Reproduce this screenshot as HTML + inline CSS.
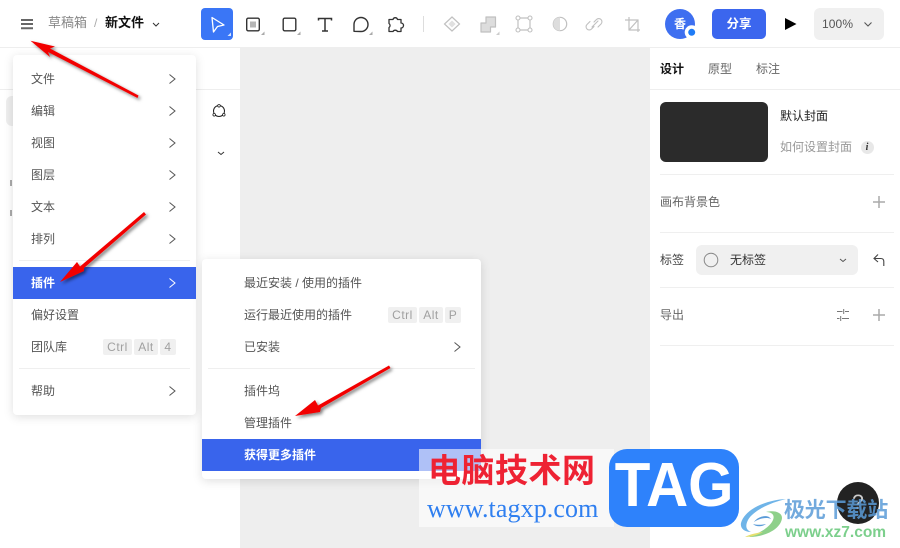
<!DOCTYPE html>
<html lang="zh"><head><meta charset="utf-8"><style>
*{box-sizing:border-box}
html,body{margin:0;padding:0}
body{width:900px;height:548px;position:relative;overflow:hidden;background:#fff;font-family:"Liberation Sans","Noto Sans CJK SC",sans-serif;font-size:12px;color:#333}
.a{position:absolute}
.t{position:absolute;line-height:16px;white-space:nowrap}
.menu{position:absolute;background:#fff;border-radius:4px;box-shadow:0 2px 10px rgba(0,0,0,.13)}
.k{position:absolute;height:16px;line-height:16px;background:#f0f0f0;color:#a0a0a0;border-radius:2px;text-align:center;font-size:12px;letter-spacing:.5px}
.ln{position:absolute;background:#efefef;height:1px}
svg{position:absolute;overflow:visible}
</style></head><body>
<div class="a" style="left:240px;top:47px;width:409px;height:501px;background:#eee"></div>
<div class="a" style="left:0;top:47px;width:240px;height:1px;background:#eee"></div>
<div class="a" style="left:0;top:89px;width:240px;height:1px;background:#eee"></div>
<div class="a" style="left:649px;top:47px;width:251px;height:1px;background:#eee"></div>
<div class="a" style="left:649px;top:47px;width:1px;height:501px;background:#eee"></div>
<div class="a" style="left:649px;top:89px;width:251px;height:1px;background:#eee"></div>
<div class="a" style="left:6px;top:96px;width:20px;height:30px;background:#eee;border-radius:6px"></div>
<div class="a" style="left:10px;top:180px;width:2px;height:6px;background:#aaa"></div>
<div class="a" style="left:10px;top:210px;width:2px;height:6px;background:#aaa"></div>

<!-- top bar -->
<svg style="left:0;top:0" width="900" height="48" fill="none">
<path d="M21 20H33M21 24H33M21 28.200H33" stroke="#666" stroke-width="2"/>
<path d="M153 23l3 3 3-3" stroke="#333" stroke-width="1"/>
<rect x="201" y="8" width="32" height="32" rx="4" fill="#3a76f6"/>
<path d="M212 17.500l12 7.500-6.500 1.500-4 5.500z" stroke="#fff" stroke-width="1.300" stroke-linejoin="round"/>
<path d="M231 36v-3.500l-3.500 3.500z" fill="#d6e3fd"/>
<rect x="246.700" y="18.200" width="12.600" height="12.600" rx="1.500" stroke="#333" stroke-width="1.400"/>
<rect x="250" y="21.500" width="6" height="6" fill="#b5b5b5"/>
<path d="M264.500 35v-3.500l-3.500 3.500z" fill="#aaa"/>
<rect x="283.200" y="18.200" width="12.600" height="12.600" rx="1.500" stroke="#333" stroke-width="1.400"/>
<path d="M300.500 35v-3.500l-3.500 3.500z" fill="#aaa"/>
<path d="M318.500 20.500v-2H331.500v2M325 18.500V31M322 31H328" stroke="#333" stroke-width="1.500"/>
<path d="M354 31.300V24.500a7 7 0 1 1 7 7z" stroke="#333" stroke-width="1.400" stroke-linejoin="round"/>
<path d="M372.500 35v-3.500l-3.500 3.500z" fill="#aaa"/>
<path d="M389 19.500h4a2.300 2.300 0 0 1 4.500 0h3.500v3.500a2.500 2.500 0 0 1 0 5v3.500h-3.500a2.600 2.600 0 0 0-4.500 0h-4v-4a2.400 2.400 0 0 0 0-4z" stroke="#333" stroke-width="1.300" stroke-linejoin="round"/>
<path d="M423.500 16V32" stroke="#ddd"/>
<path d="M452 17l7.500 7-7.500 7-7.500-7z" stroke="#c0c0c0" stroke-width="1.200"/><path d="M452 20.500l3.700 3.500-3.700 3.500-3.700-3.500z" fill="#e0e0e0"/>
<path d="M481 23h5v-6h9.500v10h-5v5H481z" fill="#ddd" stroke="#c0c0c0" stroke-width="1.200" stroke-linejoin="round"/>
<path d="M499.500 35v-3.500l-3.500 3.500z" fill="#ccc"/>
<path d="M518.500 18H529.500M518.500 30H529.500M518 18.500V29.500M530 18.500V29.500" stroke="#c0c0c0" stroke-width="1.200"/>
<circle cx="518" cy="18" r="2" fill="#fff" stroke="#c0c0c0" stroke-width="1.100"/><circle cx="530" cy="18" r="2" fill="#fff" stroke="#c0c0c0" stroke-width="1.100"/><circle cx="518" cy="30" r="2" fill="#fff" stroke="#c0c0c0" stroke-width="1.100"/><circle cx="530" cy="30" r="2" fill="#fff" stroke="#c0c0c0" stroke-width="1.100"/>
<circle cx="560" cy="24" r="6.700" stroke="#c0c0c0" stroke-width="1.200"/><path d="M560 17.300a6.700 6.700 0 0 0 0 13.400z" fill="#ddd"/>
<path d="M594 22l2.500-2.500a3 3 0 0 1 4.500 4.500l-3 3M594 26.500l-2.500 2.500a3 3 0 0 1-4.500-4.500l3-3M592 27l6-6" stroke="#c0c0c0" stroke-width="1.100" stroke-linecap="round"/>
<path d="M625 20H638V32M629 17V30H640M629 30L638 20" stroke="#c0c0c0" stroke-width="1.200"/>
<circle cx="680" cy="24" r="15" fill="#3e6ff0"/>
<circle cx="691.700" cy="32.300" r="7" fill="#fff"/><circle cx="691.700" cy="32.300" r="3.500" fill="#1f7cf6"/>
<path d="M785 18l11.500 6L785 30z" fill="#000"/>
</svg>
<div class="t" style="left:48px;top:15px;color:#888;font-size:13px">草稿箱</div>
<div class="t" style="left:94px;top:15px;color:#aaa">/</div>
<div class="t" style="left:105px;top:15px;color:#111;font-weight:bold;font-size:13px">新文件</div>
<div class="t" style="left:674px;top:16px;color:#fff;font-weight:bold">香</div>
<div class="a" style="left:712px;top:9px;width:54px;height:30px;background:#3b66ee;border-radius:5px;color:#fff;font-weight:bold;text-align:center;line-height:30px;font-size:12.500px">分享</div>
<div class="a" style="left:814px;top:8px;width:70px;height:32px;background:#f0f0f0;border-radius:6px"></div>
<div class="t" style="left:822px;top:16px;color:#555;font-size:12px;letter-spacing:.1px">100%</div>
<svg style="left:0;top:0" width="900" height="48" fill="none"><path d="M864.500 22.500l3.500 3.500 3.500-3.500" stroke="#555" stroke-width="1.100"/></svg>

<!-- left panel icons -->
<svg style="left:0;top:0" width="240" height="170" fill="none">
<circle cx="219" cy="111" r="5.500" stroke="#222" stroke-width="1"/>
<circle cx="219" cy="105.800" r="1.300" fill="#fff" stroke="#222" stroke-width=".8"/><circle cx="214.200" cy="114.800" r="1.300" fill="#fff" stroke="#222" stroke-width=".8"/><circle cx="223.800" cy="114.800" r="1.300" fill="#fff" stroke="#222" stroke-width=".8"/>
<path d="M218 152l3 2.500 3-2.500" stroke="#333" stroke-width="1"/>
</svg>

<!-- right panel -->
<div class="t" style="left:660px;top:61px;color:#111;font-weight:bold">设计</div>
<div class="t" style="left:708px;top:61px;color:#666">原型</div>
<div class="t" style="left:756px;top:61px;color:#666">标注</div>
<div class="a" style="left:660px;top:102px;width:108px;height:60px;background:#2b2b2b;border-radius:6px"></div>
<div class="t" style="left:780px;top:108px;color:#222">默认封面</div>
<div class="t" style="left:780px;top:139px;color:#999">如何设置封面</div>
<div class="a" style="left:860.500px;top:140.500px;width:13px;height:13px;border-radius:50%;background:#e8e8e8;color:#333;font:italic bold 10px/13px 'Liberation Serif',serif;text-align:center">i</div>
<div class="ln" style="left:660px;top:174px;width:234px"></div>
<div class="t" style="left:660px;top:194px;color:#666">画布背景色</div>
<div class="ln" style="left:660px;top:232px;width:234px"></div>
<div class="t" style="left:660px;top:252px;color:#444">标签</div>
<div class="a" style="left:696px;top:245px;width:162px;height:30px;background:#f0f0f0;border-radius:6px"></div>
<div class="t" style="left:730px;top:252px;color:#333">无标签</div>
<div class="ln" style="left:660px;top:287px;width:234px"></div>
<div class="t" style="left:660px;top:307px;color:#666">导出</div>
<div class="ln" style="left:660px;top:345px;width:234px"></div>
<svg style="left:650px;top:170px" width="250" height="190" fill="none">
<path d="M223 32H235M229 26V38M223 145H235M229 139V151" stroke="#aaa" stroke-width="1.500"/>
<circle cx="61" cy="90" r="6.800" stroke="#888" stroke-width="1"/>
<path d="M190 89l3 2.500 3-2.500" stroke="#555" stroke-width="1"/>
<path d="M233.800 96V91.500q0-3-3-3H224M228 84.500L224 88.500l4 3.500" stroke="#444" stroke-width="1.100"/>
<path d="M187 141.500H192.500M195 141.500H199M187 148.500H189.500M192 148.500H199M193.700 139V144M190.700 146V151" stroke="#777" stroke-width="1"/>
</svg>

<!-- main menu -->
<div class="menu" style="left:13px;top:55px;width:183px;height:360px"></div>
<div class="a" style="left:13px;top:267px;width:183px;height:32px;background:#3964ec"></div>
<div class="ln" style="left:19px;top:260px;width:171px"></div>
<div class="ln" style="left:19px;top:368px;width:171px"></div>
<div class="t" style="left:31px;top:71px;color:#555">文件</div>
<div class="t" style="left:31px;top:103px;color:#555">编辑</div>
<div class="t" style="left:31px;top:135px;color:#555">视图</div>
<div class="t" style="left:31px;top:167px;color:#555">图层</div>
<div class="t" style="left:31px;top:199px;color:#555">文本</div>
<div class="t" style="left:31px;top:231px;color:#555">排列</div>
<div class="t" style="left:31px;top:275px;color:#fff;font-weight:bold">插件</div>
<div class="t" style="left:31px;top:307px;color:#555">偏好设置</div>
<div class="t" style="left:31px;top:339px;color:#555">团队库</div>
<div class="t" style="left:31px;top:383px;color:#555">帮助</div>
<div class="k" style="left:103px;top:339px;width:29px">Ctrl</div>
<div class="k" style="left:134px;top:339px;width:24px">Alt</div>
<div class="k" style="left:160px;top:339px;width:16px">4</div>
<svg style="left:0;top:0" width="240" height="420" fill="none" stroke="#555" stroke-width="1">
<path d="M169.500 74.500l5.500 4.500-5.500 4.500M169.500 106.500l5.500 4.500-5.500 4.500M169.500 138.500l5.500 4.500-5.500 4.500M169.500 170.500l5.500 4.500-5.500 4.500M169.500 202.500l5.500 4.500-5.500 4.500M169.500 234.500l5.500 4.500-5.500 4.500M169.500 386.500l5.500 4.500-5.500 4.500"/>
<path d="M169.500 278.500l5.500 4.500-5.500 4.500" stroke="#fff"/>
</svg>

<!-- submenu -->
<div class="menu" style="left:202px;top:259px;width:279px;height:220px"></div>
<div class="a" style="left:202px;top:439px;width:279px;height:32px;background:#3964ec"></div>
<div class="ln" style="left:208px;top:368px;width:267px"></div>
<div class="t" style="left:244px;top:275px;color:#555">最近安装 / 使用的插件</div>
<div class="t" style="left:244px;top:307px;color:#555">运行最近使用的插件</div>
<div class="t" style="left:244px;top:339px;color:#555">已安装</div>
<div class="t" style="left:244px;top:383px;color:#555">插件坞</div>
<div class="t" style="left:244px;top:415px;color:#555">管理插件</div>
<div class="t" style="left:244px;top:447px;color:#fff;font-weight:bold">获得更多插件</div>
<div class="k" style="left:388px;top:307px;width:29px">Ctrl</div>
<div class="k" style="left:419px;top:307px;width:24px">Alt</div>
<div class="k" style="left:445px;top:307px;width:16px">P</div>
<svg style="left:0;top:0" width="500" height="360" fill="none"><path d="M454.500 342.500l5.500 4.500-5.500 4.500" stroke="#555" stroke-width="1"/></svg>

<!-- help button -->
<div class="a" style="left:837px;top:482px;width:42px;height:42px;border-radius:50%;background:#222;color:#ccc;text-align:center;font-size:21px;line-height:42px">?</div>

<!-- watermark -->
<div class="a" style="left:419px;top:449px;width:195px;height:78px;background:rgba(255,255,255,.6)"></div>
<div class="t" style="left:428px;top:453px;font-size:33px;line-height:36px;font-weight:bold;color:#ee2233;letter-spacing:.5px">电脑技术网</div>
<div class="t" style="left:427px;top:495px;font-family:'Liberation Serif',serif;font-size:26px;line-height:28px;color:#2f7ff0;letter-spacing:.1px">www.tagxp.com</div>
<div class="a" style="left:609px;top:449px;width:130px;height:78px;background:#2e82fb;border-radius:18px;color:#fff;font:bold 62px/73px 'Liberation Sans',sans-serif;text-align:center"><span style="display:inline-block;transform:scaleX(.94);letter-spacing:0">TAG</span></div>
<svg style="left:740px;top:495px" width="50" height="45" fill="none">
<path d="M46 4C26 5 5 14 1 28c-1 5 3 9 10 9-5-2-6-6-3-12C13 16 29 8 46 4z" fill="#6fb4e8"/>
<path d="M9 42c16 0 32-8 33-19 0-6-8-8-16-6 6 0 9 3 7 8-3 7-13 13-24 17z" fill="#8ed08a"/>
<path d="M5 42c6 0 13-2 18-5-6 1-13 2-18 5z" fill="#e6e070"/>
<path d="M14 27c4-6 14-8 17-3-4-2-11-1-17 3zM13 29c3 3 9 3 13 0-5 1-9 1-13 0z" fill="#5a9bd8"/>
</svg>
<div class="t" style="left:784px;top:497px;font-size:21px;line-height:28px;font-weight:bold;color:rgba(90,155,215,.85);letter-spacing:-.2px">极光下载站</div>
<div class="t" style="left:785px;top:523px;font-size:15.500px;line-height:20px;color:#7ccf8c;font-weight:bold">www.xz7.com</div>

<!-- red arrows -->
<svg style="left:0;top:0" width="900" height="548">
<defs><filter id="s" x="-30%" y="-30%" width="160%" height="160%"><feDropShadow dx="2" dy="2" stdDeviation="1.500" flood-color="#000" flood-opacity=".5"/></filter></defs>
<g fill="#f20000" filter="url(#s)">
<path d="M30.500 40.700L55 46.500 50 48.500 138.500 95.500 137.500 98 48 52 50 57z"/>
<path d="M60 282L77 262 80 266.500 144 212 146 214.500 84 268 84 271z"/>
<path d="M295 416L315 400 318 405.500 389 365.500 390.500 368 321 408 320 412z"/>
</g>
</svg>
</body></html>
